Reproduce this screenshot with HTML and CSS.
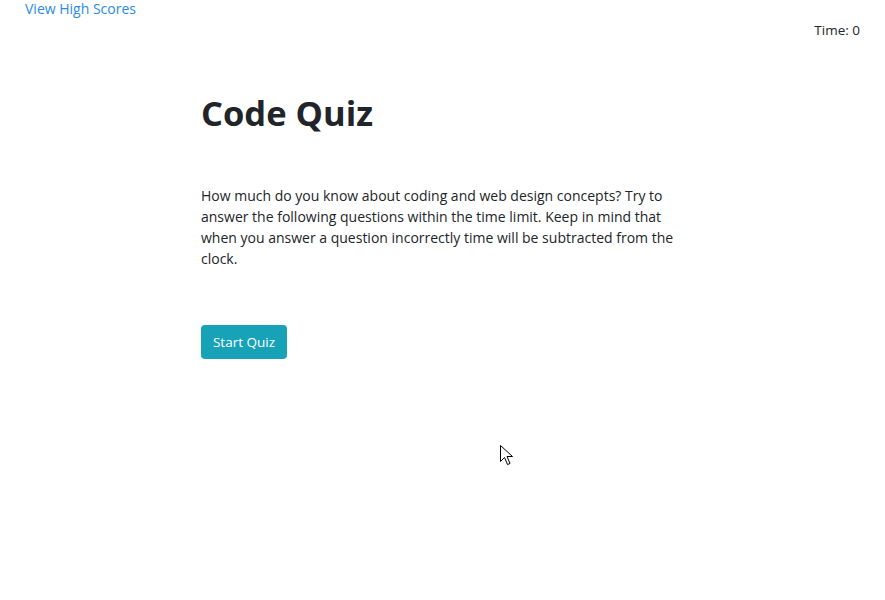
FILE: index.html
```html
<!DOCTYPE html>
<html>
<head>
<meta charset="utf-8">
<link rel="stylesheet" href="styles.css">
</head>
<body>
<header class="topbar">
  <a class="scores" href="#">View High Scores</a>
  <div class="timer">Time: 0</div>
</header>
<main class="quiz">
  <h1 class="title">Code Quiz</h1>
  <p class="intro">How much do you know about coding and web design concepts? Try to answer the following questions within the time limit. Keep in mind that when you answer a question incorrectly time will be subtracted from the clock.</p>
  <button class="start">Start Quiz</button>
</main>
<svg class="cursor" width="14" height="22" viewBox="0 0 14 22"><path d="M0.5 0.5 L0.5 16.5 L4.5 12.5 L7.5 19.5 L10 18.5 L7 11.5 L12.5 11.5 Z" fill="#fff" stroke="#000" stroke-width="1"/></svg>
</body>
</html>
```
FILE: styles.css
```css
html, body { margin: 0; padding: 0; background: #fff; }
body {
  font-family: "Open Sans", "Noto Sans", sans-serif;
  color: #212529;
  font-size: 14px;
  position: relative;
  height: 600px;
  overflow: hidden;
}
.topbar {
  display: flex;
  justify-content: space-between;
  align-items: flex-start;
  padding: 0 25px 0 25px;
}
.scores {
  color: #2a8be8;
  text-decoration: none;
  font-size: 14px;
  line-height: 18px;
}
.timer {
  font-size: 13.5px;
  line-height: 18px;
  margin-top: 21px;
}
.quiz {
  margin: 52px 0 0 201px;
  width: 476px;
}
.title {
  font-size: 34.5px;
  font-weight: 700;
  margin: 0;
  line-height: 44px;
  color: #212529;
}
.intro {
  margin: 50px 0 0;
  font-size: 14px;
  line-height: 21px;
}
.start {
  margin-top: 56px;
  background: #17a2b8;
  color: #fff;
  border: none;
  border-radius: 4px;
  font-family: inherit;
  font-size: 13.5px;
  white-space: nowrap;
  padding: 0;
  height: 34px;
  width: 86px;
}
.cursor { position: absolute; left: 500px; top: 445px; }
```
